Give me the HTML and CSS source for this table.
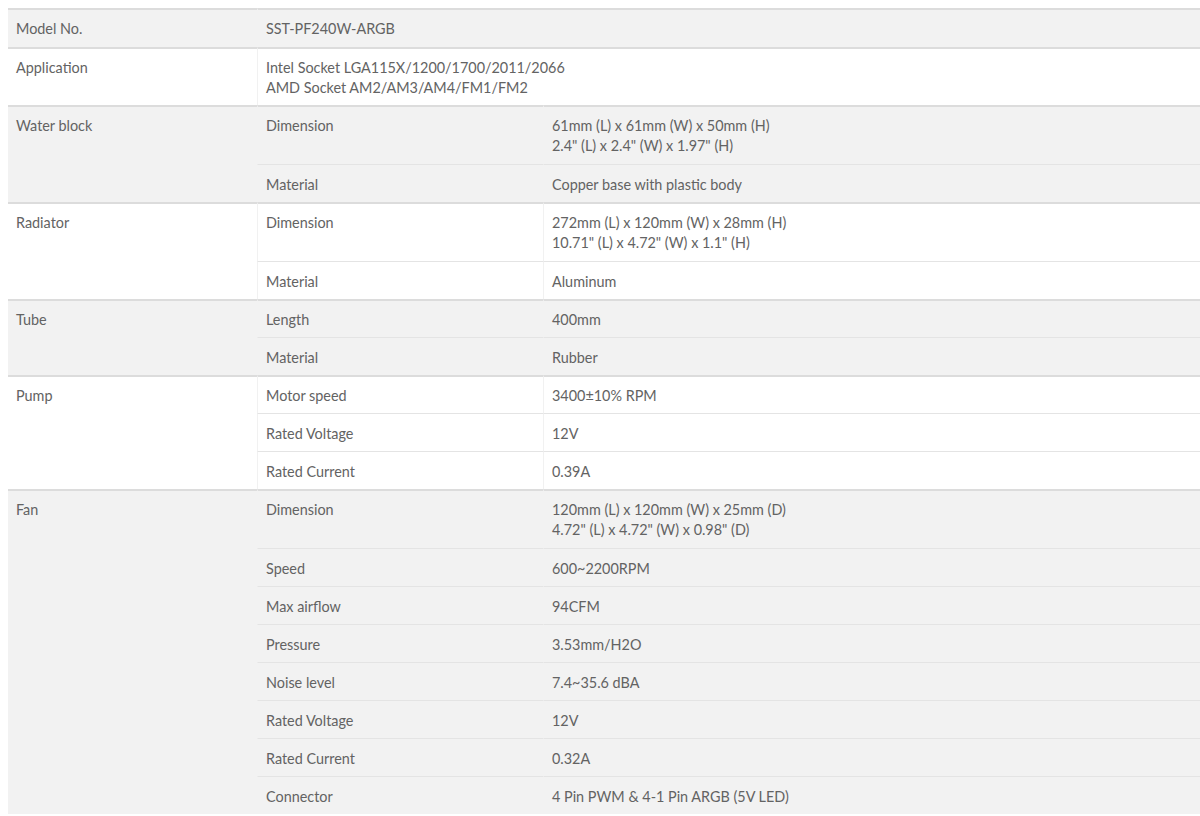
FILE: index.html
```html
<!DOCTYPE html>
<html>
<head>
<meta charset="utf-8">
<link rel="stylesheet" href="styles.css">
</head>
<body>
<table class="spec">
  <colgroup><col class="c1"><col class="c2"><col class="c3"></colgroup>
  <tbody class="grp alt first">
    <tr><td class="lbl">Model No.</td><td colspan="2">SST-PF240W-ARGB</td></tr>
  </tbody>
  <tbody class="grp">
    <tr><td class="lbl">Application</td><td colspan="2">Intel Socket LGA115X/1200/1700/2011/2066<br>AMD Socket AM2/AM3/AM4/FM1/FM2</td></tr>
  </tbody>
  <tbody class="grp alt">
    <tr class="two"><td class="lbl" rowspan="2">Water block</td><td>Dimension</td><td>61mm (L) x 61mm (W) x 50mm (H)<br>2.4" (L) x 2.4" (W) x 1.97" (H)</td></tr>
    <tr><td>Material</td><td>Copper base with plastic body</td></tr>
  </tbody>
  <tbody class="grp">
    <tr class="two"><td class="lbl" rowspan="2">Radiator</td><td>Dimension</td><td>272mm (L) x 120mm (W) x 28mm (H)<br>10.71" (L) x 4.72" (W) x 1.1" (H)</td></tr>
    <tr><td>Material</td><td>Aluminum</td></tr>
  </tbody>
  <tbody class="grp alt">
    <tr><td class="lbl" rowspan="2">Tube</td><td>Length</td><td>400mm</td></tr>
    <tr><td>Material</td><td>Rubber</td></tr>
  </tbody>
  <tbody class="grp">
    <tr><td class="lbl" rowspan="3">Pump</td><td>Motor speed</td><td>3400±10% RPM</td></tr>
    <tr><td>Rated Voltage</td><td>12V</td></tr>
    <tr><td>Rated Current</td><td>0.39A</td></tr>
  </tbody>
  <tbody class="grp alt">
    <tr class="two"><td class="lbl" rowspan="8">Fan</td><td>Dimension</td><td>120mm (L) x 120mm (W) x 25mm (D)<br>4.72" (L) x 4.72" (W) x 0.98" (D)</td></tr>
    <tr><td>Speed</td><td>600~2200RPM</td></tr>
    <tr><td>Max airflow</td><td>94CFM</td></tr>
    <tr><td>Pressure</td><td>3.53mm/H2O</td></tr>
    <tr><td>Noise level</td><td>7.4~35.6 dBA</td></tr>
    <tr><td>Rated Voltage</td><td>12V</td></tr>
    <tr><td>Rated Current</td><td>0.32A</td></tr>
    <tr><td>Connector</td><td>4 Pin PWM &amp; 4-1 Pin ARGB (5V LED)</td></tr>
  </tbody>
</table>
</body>
</html>
```

FILE: styles.css
```css
html, body {
  background: #ffffff;
}
body {
  margin: 8px 0 0 8px;
  font-family: Lato, "Liberation Sans", sans-serif;
  font-size: 14.4px;
  color: #636363;
}
.spec {
  width: 1192px;
  border-collapse: separate;
  border-spacing: 0;
  table-layout: fixed;
}
.c1 { width: 249px; }
.c2 { width: 286px; }
.spec td {
  padding: 10px 9px 7px 8px;
  line-height: 20px;
  vertical-align: top;
  text-align: left;
  border-top: 1px solid #e4e4e4;
  border-left: 1px solid #f1f1f1;
}
.spec td.lbl {
  border-left: none;
}
.grp tr:first-child td {
  border-top: 2px solid #dcdcdc;
  padding-top: 9px;
  padding-bottom: 7px;
}
.grp.first tr:first-child td {
  padding-bottom: 8px;
}
.grp tr.two td {
  padding-bottom: 8px;
}
.alt {
  background: #f2f2f2;
}
.alt td {
  border-left-color: #f2f2f2;
}
```
